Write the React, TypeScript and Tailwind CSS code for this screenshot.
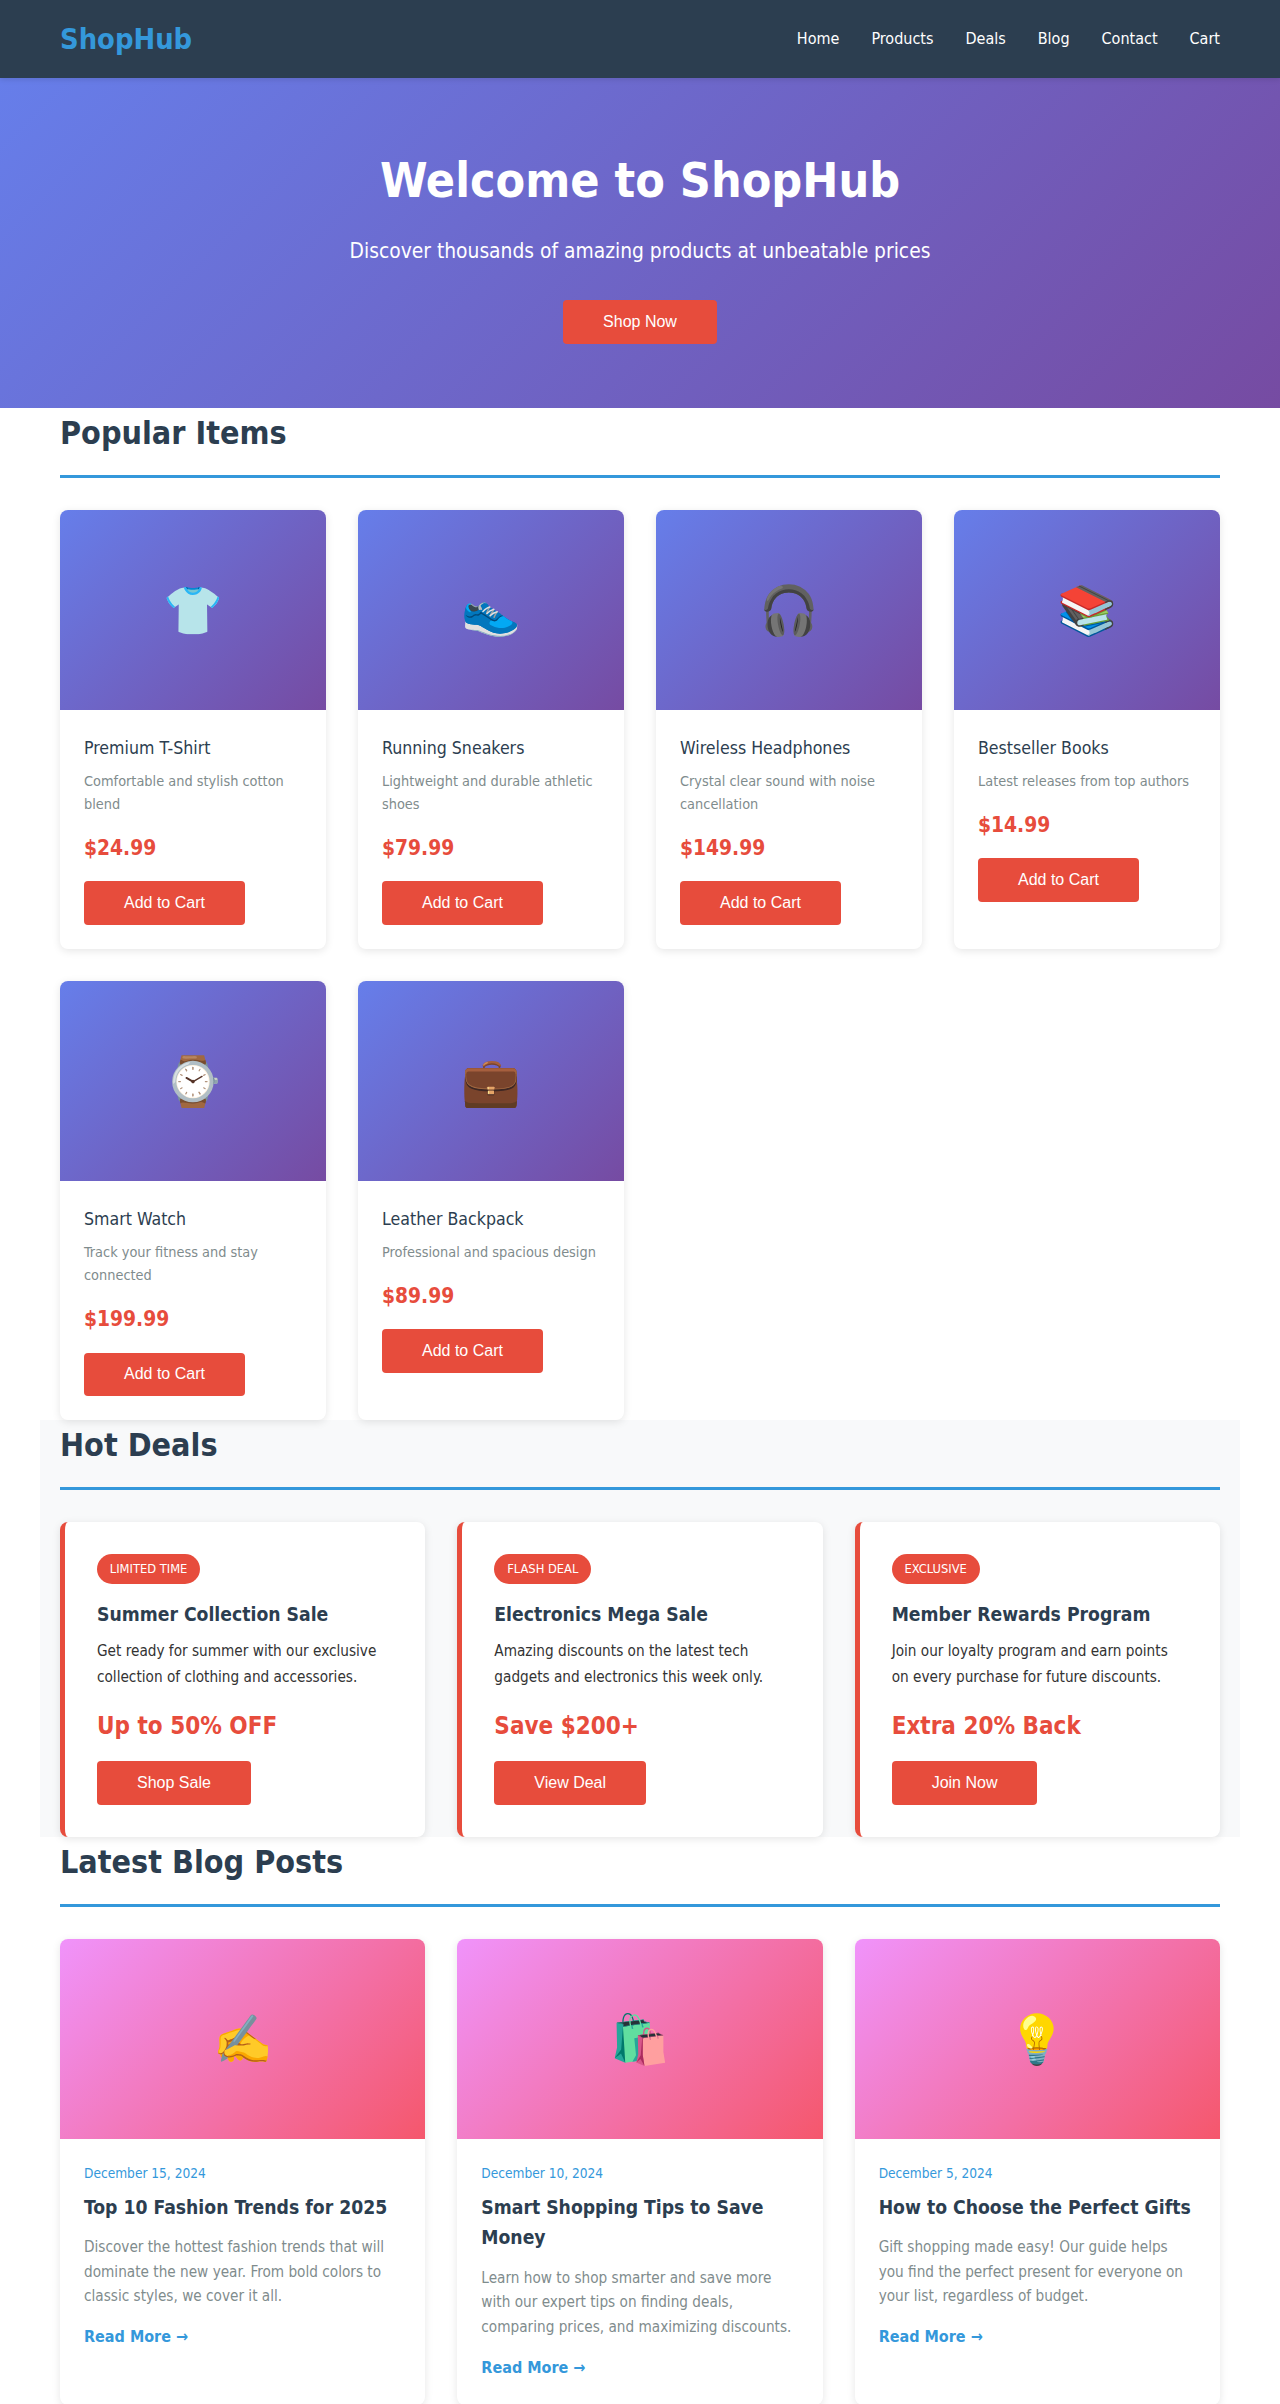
import React from "react";

const products = [
  { icon: "👕", name: "Premium T-Shirt", desc: "Comfortable and stylish cotton blend", price: "$24.99" },
  { icon: "👟", name: "Running Sneakers", desc: "Lightweight and durable athletic shoes", price: "$79.99" },
  { icon: "🎧", name: "Wireless Headphones", desc: "Crystal clear sound with noise cancellation", price: "$149.99" },
  { icon: "📚", name: "Bestseller Books", desc: "Latest releases from top authors", price: "$14.99" },
  { icon: "⌚", name: "Smart Watch", desc: "Track your fitness and stay connected", price: "$199.99" },
  { icon: "💼", name: "Leather Backpack", desc: "Professional and spacious design", price: "$89.99" },
];

const deals = [
  { badge: "LIMITED TIME", title: "Summer Collection Sale", text: "Get ready for summer with our exclusive collection of clothing and accessories.", offer: "Up to 50% OFF", cta: "Shop Sale" },
  { badge: "FLASH DEAL", title: "Electronics Mega Sale", text: "Amazing discounts on the latest tech gadgets and electronics this week only.", offer: "Save $200+", cta: "View Deal" },
  { badge: "EXCLUSIVE", title: "Member Rewards Program", text: "Join our loyalty program and earn points on every purchase for future discounts.", offer: "Extra 20% Back", cta: "Join Now" },
];

const posts = [
  { icon: "✍️", date: "December 15, 2024", title: "Top 10 Fashion Trends for 2025", text: "Discover the hottest fashion trends that will dominate the new year. From bold colors to classic styles, we cover it all." },
  { icon: "🛍️", date: "December 10, 2024", title: "Smart Shopping Tips to Save Money", text: "Learn how to shop smarter and save more with our expert tips on finding deals, comparing prices, and maximizing discounts." },
  { icon: "💡", date: "December 5, 2024", title: "How to Choose the Perfect Gifts", text: "Gift shopping made easy! Our guide helps you find the perfect present for everyone on your list, regardless of budget." },
];

const navLinks = ["Home", "Products", "Deals", "Blog", "Contact", "Cart"];

const RedButton = ({ label }: { label: string }) => (
  <button className="block rounded bg-[#e74c3c] px-10 py-[12.8px] font-['Liberation_Sans',sans-serif] text-base leading-[normal] text-white">
    {label}
  </button>
);

const SectionTitle = ({ title }: { title: string }) => (
  <h2 className="mb-8 border-b-[3px] border-[#3498db] pb-4 text-[32px] font-bold text-[#2c3e50]">{title}</h2>
);

export default function App() {
  return (
    <div className="bg-white font-['DejaVu_Sans_Condensed','DejaVu_Sans',sans-serif] leading-[1.6] text-[#333]">
      <header className="relative z-10 bg-[#2c3e50] shadow-[0_2px_5px_rgba(0,0,0,0.1)]">
        <div className="mx-auto flex max-w-[1200px] items-center justify-between px-5 py-4">
          <div className="text-[28.8px] font-bold text-[#3498db]">ShopHub</div>
          <nav className="flex gap-8">
            {navLinks.map((l) => (
              <a key={l} className="text-white">{l}</a>
            ))}
          </nav>
        </div>
      </header>

      <section className="bg-[linear-gradient(135deg,#667eea_0%,#764ba2_100%)] px-5 py-16 text-center text-white">
        <h1 className="mb-4 text-5xl leading-[1.6] font-bold">Welcome to ShopHub</h1>
        <p className="mb-8 text-[20.8px]">Discover thousands of amazing products at unbeatable prices</p>
        <div className="flex justify-center"><RedButton label="Shop Now" /></div>
      </section>

      <section className="mx-auto max-w-[1200px] px-5">
        <SectionTitle title="Popular Items" />
        <div className="grid grid-cols-4 gap-8">
          {products.map((p) => (
            <div key={p.name} className="overflow-hidden rounded-lg bg-white shadow-[0_2px_8px_rgba(0,0,0,0.1)]">
              <div className="flex h-[200px] items-center justify-center bg-[linear-gradient(135deg,#667eea_0%,#764ba2_100%)] text-5xl">{p.icon}</div>
              <div className="p-6">
                <h3 className="mb-2 text-[17.6px] font-normal text-[#2c3e50]">{p.name}</h3>
                <p className="mb-4 text-[14.4px] text-[#7f8c8d]">{p.desc}</p>
                <div className="mb-4 text-[20.8px] font-bold text-[#e74c3c]">{p.price}</div>
                <RedButton label="Add to Cart" />
              </div>
            </div>
          ))}
        </div>
      </section>

      <section className="mx-auto max-w-[1200px] bg-[#f8f9fa] px-5">
        <SectionTitle title="Hot Deals" />
        <div className="grid grid-cols-3 gap-8">
          {deals.map((d) => (
            <div key={d.title} className="rounded-lg border-l-[5px] border-[#e74c3c] bg-white p-8 shadow-[0_2px_8px_rgba(0,0,0,0.1)]">
              <span className="mb-4 block w-fit rounded-[20px] bg-[#e74c3c] px-[12.8px] py-[4.8px] text-[12.8px] text-white">{d.badge}</span>
              <h3 className="mb-2 text-[19.2px] font-bold text-[#2c3e50]">{d.title}</h3>
              <p className="mb-4 text-[15.2px] leading-[1.7] text-[#333]">{d.text}</p>
              <div className="mb-4 text-2xl leading-[1.6] font-bold text-[#e74c3c]">{d.offer}</div>
              <RedButton label={d.cta} />
            </div>
          ))}
        </div>
      </section>

      <section className="mx-auto max-w-[1200px] px-5">
        <SectionTitle title="Latest Blog Posts" />
        <div className="grid grid-cols-3 gap-8">
          {posts.map((p) => (
            <div key={p.title} className="overflow-hidden rounded-lg bg-white shadow-[0_2px_8px_rgba(0,0,0,0.1)]">
              <div className="flex h-[200px] items-center justify-center bg-[linear-gradient(135deg,#f093fb_0%,#f5576c_100%)] text-5xl">{p.icon}</div>
              <div className="p-6">
                <div className="mb-2 text-[13.6px] text-[#3498db]">{p.date}</div>
                <h3 className="mb-3 text-[19.2px] font-bold text-[#2c3e50]">{p.title}</h3>
                <p className="mb-4 text-[15.2px] text-[#7f8c8d]">{p.text}</p>
                <a className="font-bold text-[#3498db]">Read More →</a>
              </div>
            </div>
          ))}
        </div>
      </section>
    </div>
  );
}
